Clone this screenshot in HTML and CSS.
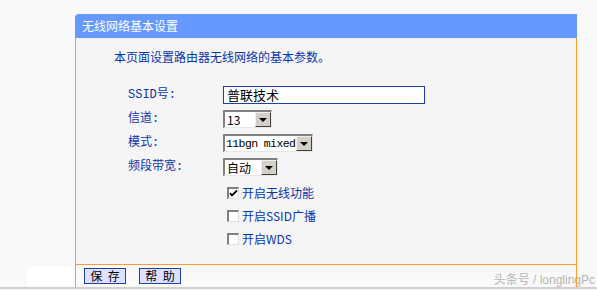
FILE: index.html
```html
<!DOCTYPE html>
<html>
<head>
<meta charset="utf-8">
<link rel="stylesheet" href="styles.css">
</head>
<body>
<div class="page">
  <div class="side"></div>
  <div class="panel">
    <div class="title">无线网络基本设置</div>
    <div class="content">
      <p class="desc">本页面设置路由器无线网络的基本参数。</p>
      <div class="form">
        <div class="label">SSID号:</div>
        <div class="ctl"><div class="textbox">普联技术</div></div>
        <div class="label">信道:</div>
        <div class="ctl"><div class="select w-ch"><span class="val">13</span><span class="btn"><i></i></span></div></div>
        <div class="label">模式:</div>
        <div class="ctl"><div class="select w-mode"><span class="val mono">11bgn mixed</span><span class="btn"><i></i></span></div></div>
        <div class="label">频段带宽:</div>
        <div class="ctl"><div class="select w-bw"><span class="val">自动</span><span class="btn"><i></i></span></div></div>
      </div>
      <div class="checks">
        <label class="chk"><span class="box checked">
          <svg width="9" height="9" viewBox="0 0 9 9"><path d="M1 4 L3 6.5 L8 1.5" fill="none" stroke="#000" stroke-width="1.8"/></svg>
        </span>开启无线功能</label>
        <label class="chk"><span class="box"></span>开启SSID广播</label>
        <label class="chk"><span class="box"></span>开启WDS</label>
      </div>
    </div>
    <div class="footer">
      <span class="button">保&nbsp;存</span>
      <span class="button">帮&nbsp;助</span>
      <span class="mark">头条号 / longlingPc</span>
    </div>
  </div>
</div>
<div class="bottomline"></div>
</body>
</html>
```
FILE: styles.css
```css
html, body {
  margin: 0;
  padding: 0;
  background: #f9f9f9;
  font-family: "Noto Sans CJK SC", "Liberation Sans", sans-serif;
  font-size: 12px;
}
.page {
  display: flex;
  padding-top: 14px;
  height: 273px;
}
.side {
  width: 46px;
  margin-left: 27px;
  margin-top: 253px;
  height: 20px;
  background: #ffffff;
}
.panel {
  margin-left: 2px;
  width: 502px;
  display: flex;
  flex-direction: column;
}
.title {
  height: 24px;
  line-height: 23px;
  background: #6699ff;
  color: #ffffff;
  padding-left: 7px;
  border-top-left-radius: 4px;
  font-size: 12px;
}
.content {
  height: 226px;
  border-left: 1px solid #ff9933;
  border-right: 1px solid #ff9933;
  border-bottom: 1px solid #ff9933;
  background: #f5f5f5;
  color: #0a36a8;
}
.desc {
  margin: 12px 0 0 38px;
  line-height: 14px;
  color: #0a36a8;
}
.form {
  display: grid;
  grid-template-columns: 95px auto;
  grid-auto-rows: 18px;
  row-gap: 6px;
  margin: 22px 0 0 52px;
  align-items: center;
}
.label {
  font-family: "Liberation Mono", "Noto Sans CJK SC", monospace;
  font-size: 12px;
  color: #0a36a8;
  line-height: 18px;
}
.ctl { display: flex; }
.textbox {
  width: 197px;
  height: 16px;
  border: 1px solid #1c3fa8;
  background: #ffffff;
  color: #000;
  padding-left: 3px;
  line-height: 16px;
  font-size: 13px;
}
.select {
  display: flex;
  height: 15px;
  border-top: 2px solid #808080;
  border-left: 2px solid #808080;
  border-right: 1px solid #e8e8e8;
  border-bottom: 1px solid #e8e8e8;
  background: #ffffff;
  color: #000;
}
.val {
  flex: 1;
  line-height: 15px;
  padding-left: 2px;
  font-size: 12px;
  white-space: nowrap;
  overflow: hidden;
}
.mono {
  font-family: "Liberation Mono", monospace;
  font-size: 11.5px;
  letter-spacing: -0.6px;
  padding-left: 1px;
}
.btn {
  flex: none;
  width: 14px;
  height: 13px;
  background: #d4d0c8;
  border-top: 1px solid #f0f0f0;
  border-left: 1px solid #f0f0f0;
  border-right: 1px solid #404040;
  border-bottom: 1px solid #404040;
  display: flex;
  align-items: center;
  justify-content: center;
}
.btn i {
  width: 0;
  height: 0;
  border-left: 4px solid transparent;
  border-right: 4px solid transparent;
  border-top: 4px solid #000;
}
.w-ch { width: 46px; }
.w-mode { width: 87px; }
.w-bw { width: 52px; }
.checks {
  display: flex;
  flex-direction: column;
  gap: 9px;
  margin: 10px 0 0 151px;
}
.chk {
  display: flex;
  align-items: center;
  gap: 3px;
  height: 14px;
  line-height: 14px;
  color: #0a36a8;
}
.box {
  width: 9px;
  height: 9px;
  border-top: 2px solid #808080;
  border-left: 2px solid #808080;
  border-right: 1px solid #e0e0e0;
  border-bottom: 1px solid #e0e0e0;
  background: #ffffff;
  display: flex;
  align-items: center;
  justify-content: center;
}
.footer {
  flex: 1;
  border-left: 1px solid #ff9933;
  display: flex;
  align-items: flex-start;
  gap: 13px;
  padding: 3px 0 0 8px;
  position: relative;
}
.button {
  width: 40px;
  height: 14px;
  line-height: 14px;
  border: 1px solid #1c3fa8;
  background: #dde0ff;
  color: #000;
  text-align: center;
  font-size: 12px;
  word-spacing: 3px;
}
.footer::after {
  content: "";
  position: absolute;
  right: 0;
  top: 0;
  height: 22px;
  border-right: 1px solid #ff9933;
}
.mark {
  position: absolute;
  right: -18px;
  top: 5px;
  color: #b5b5b5;
  font-size: 12px;
  font-family: "Liberation Sans", "Noto Sans CJK SC", sans-serif;
}
.bottomline {
  height: 2px;
  background: #d0d0d0;
}
```
